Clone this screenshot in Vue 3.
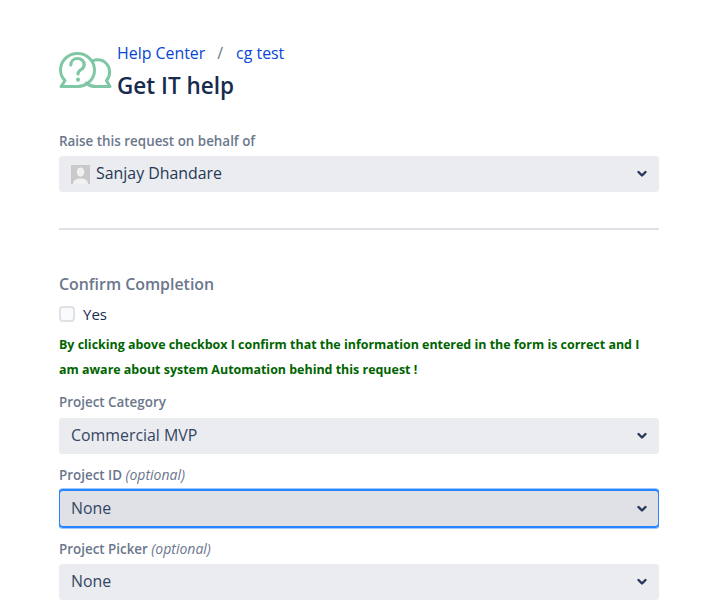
<script setup>
const fields = [
  { id: 'category', label: 'Project Category', optional: false, value: 'Commercial MVP', focused: false },
  { id: 'project', label: 'Project ID', optional: true, value: 'None', focused: true },
  { id: 'picker', label: 'Project Picker', optional: true, value: 'None', focused: false },
]
</script>

<template>
  <div class="page">
    <header class="head">
      <svg class="logo" width="53" height="37" viewBox="0 0 53 37" fill="none" stroke="#7fc7a5" stroke-width="3" stroke-linejoin="round" stroke-linecap="round">
        <path d="M18.500 1.500C9 1.500 1.500 9 1.500 18c0 4.300 1.800 8 4.500 10.600L2 34.500h16.500c9.500 0 17-7.300 17-16.500S28 1.500 18.500 1.500Z" />
        <path d="M33.500 9c1.600-.8 3.400-1.200 5.200-1.200 6.800 0 12 5.600 12 12.200 0 3.400-1.200 6.400-3.300 8.600l3.600 5.900H36.500c-3.600 0-6.800-1.300-9.300-3.500" />
        <path d="M11.800 13c0-3.800 3-6.500 6.700-6.500s6.700 2.700 6.700 6.200c0 3-1.900 4.200-3.700 5.300-1.700 1.100-2.500 2.100-2.500 4" stroke-width="3.200" />
        <path d="M19 27.500v.2" stroke-width="4" />
      </svg>
      <div class="head-text">
        <nav class="crumbs">
          <a>Help Center</a><span class="sep">/</span><a>cg test</a>
        </nav>
        <h1 class="title">Get IT help</h1>
      </div>
    </header>

    <div class="label first">Raise this request on behalf of</div>
    <div class="select">
      <span class="avatar">
        <svg width="19" height="19" viewBox="0 0 19 19">
          <rect width="19" height="19" fill="#c9c9c9" />
          <ellipse cx="9.500" cy="7" rx="3.800" ry="4.500" fill="#f1f1f1" />
          <path d="M2 19c0-4 3.500-5.500 7.500-5.500S17 15 17 19Z" fill="#f1f1f1" />
        </svg>
      </span>
      <span class="value person">Sanjay Dhandare</span>
      <svg class="chev" width="12" height="8" viewBox="0 0 12 8" fill="none" stroke="#253858" stroke-width="2.400" stroke-linecap="round" stroke-linejoin="round">
        <path d="M2.500 2l3.500 3.500L9.500 2" />
      </svg>
    </div>

    <hr class="rule" />

    <h2 class="group">Confirm Completion</h2>
    <label class="check">
      <span class="box"></span>
      <span>Yes</span>
    </label>
    <p class="notice">By clicking above checkbox I confirm that the information entered in the form is correct and I am aware about system Automation behind this request !</p>

    <div v-for="f in fields" :key="f.id" class="field">
      <div class="label">{{ f.label }} <em v-if="f.optional" class="opt">(optional)</em></div>
      <div class="select" :class="{ focused: f.focused }">
        <span class="value">{{ f.value }}</span>
        <svg class="chev" width="12" height="8" viewBox="0 0 12 8" fill="none" stroke="#253858" stroke-width="2.400" stroke-linecap="round" stroke-linejoin="round">
          <path d="M2.500 2l3.500 3.500L9.500 2" />
        </svg>
      </div>
    </div>
  </div>
</template>

<style>
html, body {
  margin: 0;
  background: #fff;
  overflow: hidden;
}
</style>

<style scoped>
.page {
  width: 600px;
  height: 608px;
  overflow: hidden;
  margin-left: 59px;
  padding-top: 41px;
  box-sizing: border-box;
  font-family: "Open Sans", "Noto Sans", sans-serif;
  color: #172b4d;
}
.head {
  display: flex;
  align-items: flex-start;
  height: 61px;
}
.logo {
  flex: none;
  margin-right: 5px;
  margin-top: 11px;
}
.crumbs {
  font-size: 15.900px;
  line-height: 22px;
  color: #0747d6;
  margin-top: 1px;
}
.sep {
  margin: 0 13px 0 12px;
  color: #6b778c;
}
.title {
  margin: 6px 0 0;
  font-size: 22.500px;
  line-height: 32px;
  font-weight: 600;
  color: #172b4d;
}
.label {
  font-size: 13.400px;
  line-height: 18px;
  font-weight: 600;
  color: #6b778c;
  margin-bottom: 7px;
}
.label.first {
  margin-top: 30px;
  margin-bottom: 6px;
}
.opt {
  font-weight: 400;
  font-size: 14px;
}
.select {
  display: flex;
  align-items: center;
  height: 36px;
  padding: 0 12px;
  box-sizing: border-box;
  background: #ebecf0;
  border-radius: 3px;
  font-size: 15.900px;
  color: #344563;
}
.select.focused {
  height: 39px;
  margin: -2px -1px 0;
  background: #dfe1e6;
  border: 2px solid #2684ff;
  border-radius: 5px;
  padding: 0 11px;
  box-shadow: 0 0 0 1px rgba(38, 132, 255, 0.45);
}
.avatar {
  display: flex;
  margin-right: 6px;
}
.value {
  flex: 1;
  margin-top: -3px;
}
.focused .value {
  margin-top: -2px;
}
.person {
  color: #253858;
}
.chev {
  flex: none;
  margin-right: -1px;
}
.rule {
  height: 2px;
  margin: 36px 0 0;
  border: 0;
  background: #dfe1e6;
}
.group {
  margin: 42px 0 0;
  font-size: 15.900px;
  line-height: 24px;
  font-weight: 600;
  color: #6b778c;
}
.check {
  display: flex;
  align-items: center;
  height: 24px;
  margin-top: 6px;
  font-size: 15px;
}
.box {
  width: 12px;
  height: 12px;
  margin-right: 8px;
  border: 2px solid #dfe1e6;
  border-radius: 4px;
  background: #fafbfc;
}
.notice {
  margin: 6px 0 0;
  font-size: 12.450px;
  line-height: 25px;
  font-weight: 700;
  color: #006400;
}
.field {
  margin-top: 11px;
}
.field + .field {
  margin-top: 12px;
}
.field:last-child .label {
  margin-bottom: 6px;
}
</style>
